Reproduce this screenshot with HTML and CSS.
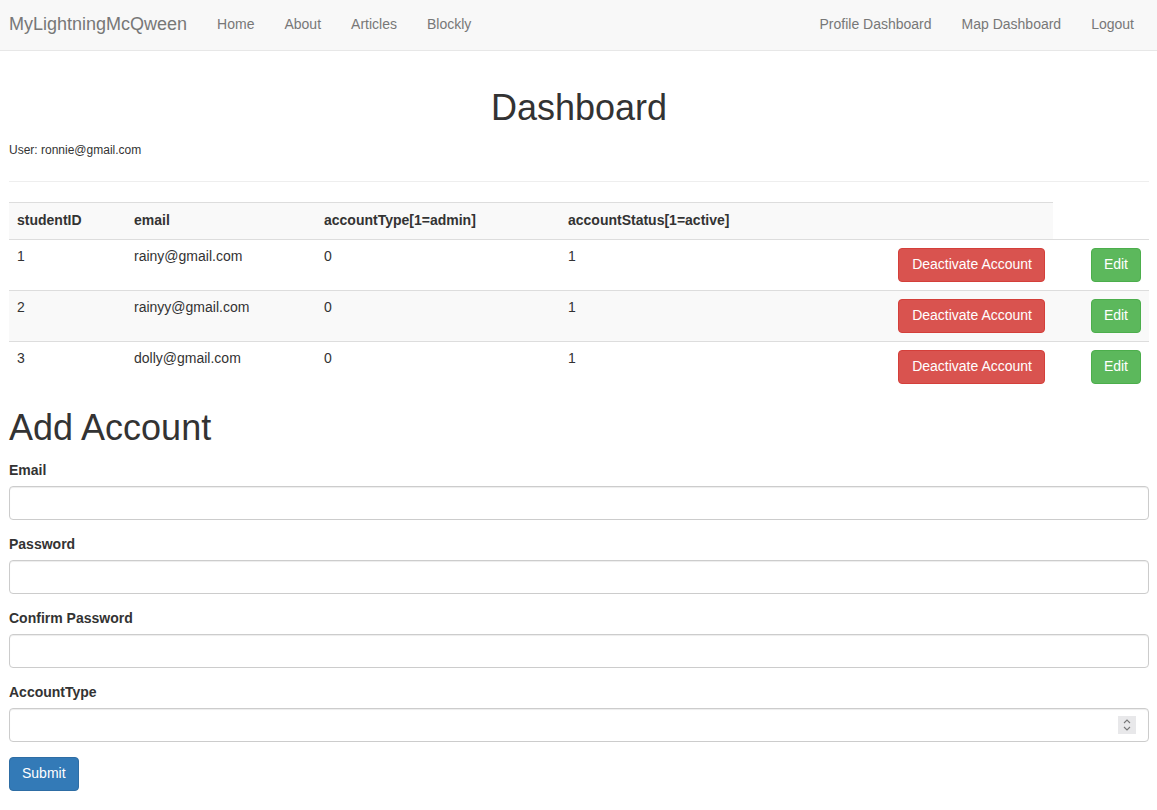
FILE: index.html
```html
<!DOCTYPE html>
<html>
<head>
<meta charset="utf-8">
<title>Dashboard</title>
<link rel="stylesheet" href="styles.css">
</head>
<body>
<nav class="navbar">
  <div class="nav-left">
    <a class="brand" href="#">MyLightningMcQween</a>
    <ul class="nav">
      <li><a href="#">Home</a></li>
      <li><a href="#">About</a></li>
      <li><a href="#">Articles</a></li>
      <li><a href="#">Blockly</a></li>
    </ul>
  </div>
  <ul class="nav">
    <li><a href="#">Profile Dashboard</a></li>
    <li><a href="#">Map Dashboard</a></li>
    <li><a href="#">Logout</a></li>
  </ul>
</nav>
<main class="main">
  <h1 class="title">Dashboard</h1>
  <p class="user">User: ronnie@gmail.com</p>
  <hr class="rule">
  <table class="table">
    <colgroup>
      <col class="c1"><col class="c2"><col class="c3"><col class="c4"><col class="c5"><col class="c6">
    </colgroup>
    <tbody>
      <tr class="odd">
        <th>studentID</th><th>email</th><th>accountType[1=admin]</th><th>accountStatus[1=active]</th><th></th>
      </tr>
      <tr>
        <td>1</td><td>rainy@gmail.com</td><td>0</td><td>1</td>
        <td class="act"><button class="btn btn-danger">Deactivate Account</button></td>
        <td class="act"><button class="btn btn-success">Edit</button></td>
      </tr>
      <tr class="odd">
        <td>2</td><td>rainyy@gmail.com</td><td>0</td><td>1</td>
        <td class="act"><button class="btn btn-danger">Deactivate Account</button></td>
        <td class="act"><button class="btn btn-success">Edit</button></td>
      </tr>
      <tr>
        <td>3</td><td>dolly@gmail.com</td><td>0</td><td>1</td>
        <td class="act"><button class="btn btn-danger">Deactivate Account</button></td>
        <td class="act"><button class="btn btn-success">Edit</button></td>
      </tr>
    </tbody>
  </table>
  <h1 class="subtitle">Add Account</h1>
  <form class="form">
    <div class="group">
      <label class="label" for="email">Email</label>
      <input class="input" id="email" type="text">
    </div>
    <div class="group">
      <label class="label" for="pw">Password</label>
      <input class="input" id="pw" type="password">
    </div>
    <div class="group">
      <label class="label" for="pw2">Confirm Password</label>
      <input class="input" id="pw2" type="password">
    </div>
    <div class="group last">
      <label class="label" for="type">AccountType</label>
      <div class="num-wrap">
        <input class="input" id="type" type="text">
        <span class="spin"><svg width="10" height="14" viewBox="0 0 10 14"><path d="M2 5 L5 2 L8 5" fill="none" stroke="#777" stroke-width="1.1"/><path d="M2 9 L5 12 L8 9" fill="none" stroke="#777" stroke-width="1.1"/></svg></span>
      </div>
    </div>
    <button type="button" class="btn btn-primary">Submit</button>
  </form>
</main>
</body>
</html>
```

FILE: styles.css
```css
* { box-sizing: border-box; }
html, body {
  margin: 0;
  padding: 0;
  background: #fff;
  font-family: "Liberation Sans", Arial, Helvetica, sans-serif;
  font-size: 14px;
  line-height: 20px;
  color: #333;
}
.navbar {
  height: 51px;
  background: #f8f8f8;
  border-bottom: 1px solid #e7e7e7;
  display: flex;
  justify-content: space-between;
  padding: 0 8px 0 0;
}
.nav-left { display: flex; }
.brand {
  display: block;
  height: 50px;
  padding: 14px 15px 16px 9px;
  font-size: 18px;
  line-height: 20px;
  color: #777;
  text-decoration: none;
}
.nav {
  display: flex;
  list-style: none;
  margin: 0;
  padding: 0;
}
.nav a {
  display: block;
  padding: 14px 15px 16px;
  line-height: 20px;
  color: #777;
  text-decoration: none;
}
.main {
  padding: 37px 8px 40px 9px;
}
.title {
  margin: 0;
  font-size: 36px;
  line-height: 39.6px;
  font-weight: 500;
  text-align: center;
}
.user {
  margin: 14px 0 0;
  font-size: 12px;
  line-height: 17px;
}
.rule {
  margin: 22px 0 20px;
  border: 0;
  border-top: 1px solid #eee;
  height: 0;
}
.table {
  width: 100%;
  table-layout: fixed;
  border-collapse: collapse;
  border-spacing: 0;
  margin: 0;
}
.c1 { width: 117px; }
.c2 { width: 190px; }
.c3 { width: 244px; }
.c4 { width: 237px; }
.c5 { width: 256px; }
.c6 { width: 96px; }
.table th, .table td {
  padding: 6px 8px 10px;
  line-height: 20px;
  vertical-align: top;
  text-align: left;
  border-top: 1px solid #ddd;
}
.table th { font-weight: bold; padding: 7px 8px 9px; }
.table .odd th, .table .odd td { background: #f9f9f9; }
.table td.act { text-align: right; padding: 8px; }
.btn {
  display: inline-block;
  margin: 0;
  padding: 5px 12px 7px;
  font-family: inherit;
  font-size: 14px;
  line-height: 20px;
  border: 1px solid transparent;
  border-radius: 4px;
  color: #fff;
  cursor: pointer;
  vertical-align: middle;
}
.btn-danger { background: #d9534f; border-color: #d43f3a; padding: 5px 12px 7px 13px; }
.btn-success { background: #5cb85c; border-color: #4cae4c; }
.btn-primary { background: #337ab7; border-color: #2e6da4; }
.subtitle {
  margin: 16px 0 13px;
  font-size: 36px;
  line-height: 39.6px;
  font-weight: 500;
}
.group { margin-bottom: 14px; }
.group.last { margin-bottom: 15px; }
.label {
  display: block;
  font-weight: bold;
  margin-bottom: 6px;
}
.input {
  display: block;
  width: 100%;
  height: 34px;
  padding: 6px 12px;
  font-family: inherit;
  font-size: 14px;
  color: #555;
  background: #fff;
  border: 1px solid #ccc;
  border-radius: 4px;
  box-shadow: inset 0 1px 1px rgba(0,0,0,.075);
  outline: none;
}
.num-wrap { position: relative; }
.spin {
  position: absolute;
  right: 13px;
  top: 8px;
  width: 18px;
  height: 18px;
  background: #e8e8ea;
  display: flex;
  align-items: center;
  justify-content: center;
}
```
